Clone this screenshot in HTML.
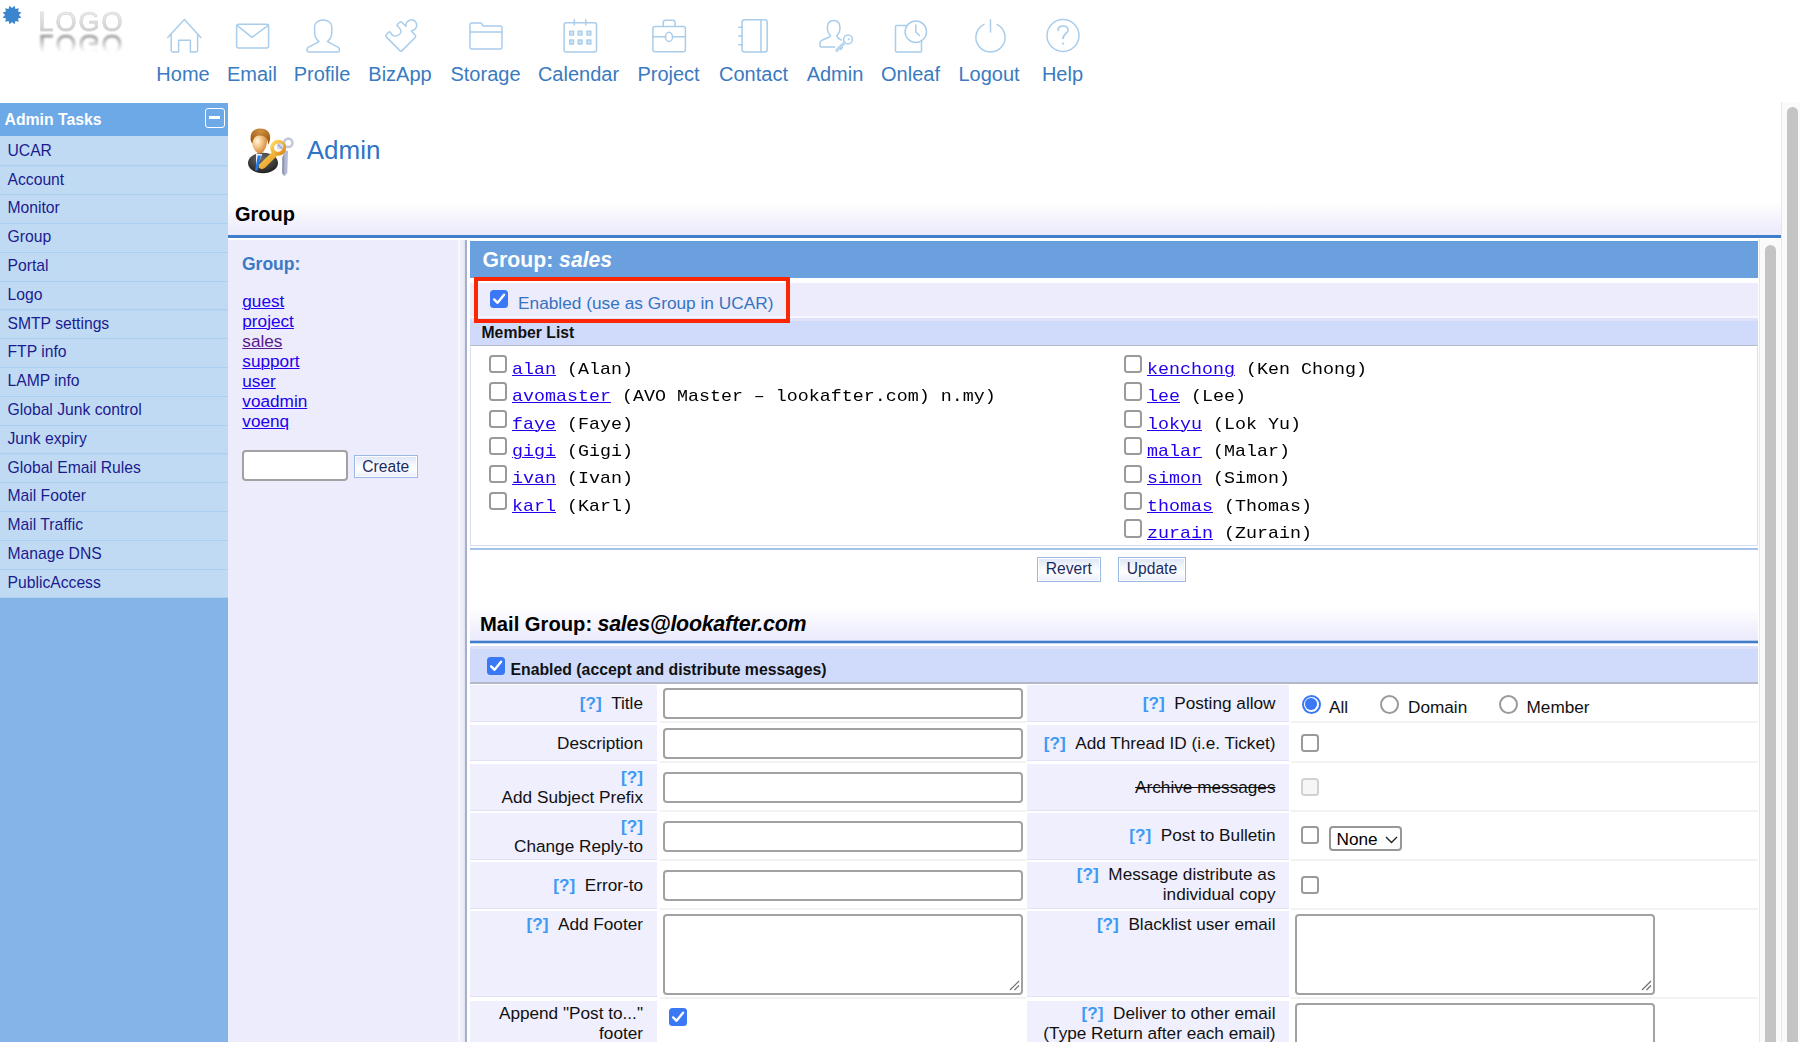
<!DOCTYPE html>
<html>
<head>
<meta charset="utf-8">
<title>Admin - Group</title>
<style>
*{box-sizing:border-box;}
html,body{margin:0;padding:0;}
body{width:1800px;height:1042px;overflow:hidden;position:relative;background:#fff;font-family:"Liberation Sans",sans-serif;color:#000;}
.abs{position:absolute;}
/* top nav */
.nav{position:absolute;top:0;left:0;width:1800px;height:103px;}
.nl{position:absolute;top:62.400px;font-size:20px;line-height:24px;color:#3a7abf;white-space:nowrap;transform:translateX(-50%);}
.ni{position:absolute;top:16px;width:40px;height:40px;transform:translateX(-50%);}
.ni svg{width:40px;height:40px;fill:none;stroke:#a9cdea;stroke-width:1.5;stroke-linejoin:round;stroke-linecap:round;}
/* sidebar */
.sb{position:absolute;left:0;top:103px;width:228px;height:939px;background:#85b5e8;}
.sbh{position:absolute;left:0;top:0;width:228px;height:33px;background:#6ca9e6;color:#fff;font-weight:bold;font-size:15.800px;line-height:33px;padding-left:4.500px;}
.sbi{position:absolute;left:0;width:228px;height:28.800px;background:#c1daf3;border-bottom:1.500px solid #abd0ef;color:#1b1b8f;font-size:15.700px;line-height:26.900px;padding-left:7.500px;}
/* main */
.lnk{color:#2200ee;text-decoration:underline;text-decoration-thickness:1.300px;}
.vis{color:#551a8b;text-decoration:underline;text-decoration-thickness:1.300px;}

.cb{position:absolute;width:18.200px;height:18.200px;border:2px solid #9a9a9a;border-radius:3.500px;background:#fff;}
.cbc{position:absolute;width:18.200px;height:18.200px;border-radius:3.500px;background:#3b78f5;}
.cbc svg{position:absolute;left:0;top:0;width:18.200px;height:18.200px;}
.mono{position:absolute;font-family:"Liberation Mono",monospace;font-size:16.200px;line-height:22px;white-space:pre;color:#000;transform:scaleX(1.1317);transform-origin:0 0;margin-top:1.400px;}
.btn{position:absolute;height:24.200px;border:1.300px solid #9bb9e4;background:linear-gradient(#dde5f4 0%,#f1f5fb 35%,#ffffff 60%,#e8eefa 100%);color:#1c2a64;font-size:15.600px;line-height:22px;text-align:center;box-shadow:inset 0 0 0 1px #fff;}
.lc{position:absolute;background:#efeffd;border-bottom:1.500px solid #dfe2f3;}
.vc{position:absolute;background:#fff;border-bottom:2px solid #f2f2f2;}
.lb{position:absolute;font-size:17.200px;line-height:20px;text-align:right;color:#111;white-space:nowrap;}
.q{color:#3e9af4;font-weight:bold;}
.inp{position:absolute;background:#fff;border:2px solid #a2a2a2;border-radius:4px;}
.rad{position:absolute;width:19px;height:19px;border:2px solid #9a9a9a;border-radius:50%;background:#fff;}
</style>
</head>
<body>
<!-- NAV -->
<div class="nav" id="nav">
<!-- starburst -->
<svg class="abs" style="left:1.800px;top:5px" width="20" height="20" viewBox="-10 -10 20 20"><polygon fill="#3b85ce" points="2.51,-9.37 3.45,-5.98 6.86,-6.86 5.98,-3.45 9.37,-2.51 6.90,-0.00 9.37,2.51 5.98,3.45 6.86,6.86 3.45,5.98 2.51,9.37 0.00,6.90 -2.51,9.37 -3.45,5.98 -6.86,6.86 -5.98,3.45 -9.37,2.51 -6.90,0.00 -9.37,-2.51 -5.98,-3.45 -6.86,-6.86 -3.45,-5.98 -2.51,-9.37 -0.00,-6.90"/></svg>
<!-- logo -->
<div class="abs" style="left:38.500px;top:5.500px;font-size:27px;line-height:32px;letter-spacing:2px;filter:blur(0.700px);-webkit-text-stroke:0.700px #d9d9d9;background:linear-gradient(to bottom,#e8e8e8 30%,#cbcbcb 80%);-webkit-background-clip:text;background-clip:text;color:transparent;">LOGO</div>
<div class="abs" style="left:38.500px;top:27.500px;font-size:27px;line-height:32px;letter-spacing:2px;transform:scaleY(-1);filter:blur(0.900px);-webkit-text-stroke:0.700px transparent;background:linear-gradient(to bottom,rgba(255,255,255,0) 25%,rgba(140,140,140,0.900) 78%);-webkit-background-clip:text;background-clip:text;color:transparent;">LOGO</div>

<div class="ni" style="left:183.5px"><svg viewBox="0 0 40 40"><path d="M3.800 21.500 L20.400 3.500 L36.800 21.500 M7.200 18 V34.500 Q7.200 35.900 8.600 35.900 H14.600 V24.200 H26.400 V35.900 H32.200 Q33.600 35.900 33.600 34.500 V18"/></svg></div>
<div class="nl" style="left:183px">Home</div>

<div class="ni" style="left:251.5px"><svg viewBox="0 0 40 40"><rect x="4.600" y="8.300" width="32" height="23.600" rx="2"/><path d="M5.400 9.600 L20 21.400 L35.800 9.600"/></svg></div>
<div class="nl" style="left:252px">Email</div>

<div class="ni" style="left:322.5px"><svg viewBox="0 0 40 40"><path d="M16 25.600 L5.200 31.400 Q4.100 32 4.100 33.300 V34.400 Q4.100 35.900 5.600 35.900 H34.900 Q36.400 35.900 36.400 34.400 V33.200 Q36.400 32 35.300 31.400 L24.400 25.600 C27 23.500 28.800 20 28.800 15.900 V11 C28.800 7 25.500 3.900 20.200 3.900 C14.900 3.900 11.600 7 11.600 11 V15.900 C11.600 20 13.400 23.500 16 25.600"/></svg></div>
<div class="nl" style="left:322px">Profile</div>

<div class="ni" style="left:401px"><svg viewBox="0 0 40 40"><path d="M21 34.600 Q19.900 35.700 18.800 34.600 L5.300 20.900 Q4.200 19.800 5.300 18.700 L7.800 16.100 Q8.500 15.400 9.200 16.200 L10.900 18.500 C12 20 14.500 20.400 16.200 19.600 C18.500 18.500 20.200 16.500 19.900 15 C19.700 13.500 19 12.500 18 11.500 L16.300 9.900 Q15.600 9.200 16.300 8.500 L18.700 6.200 Q19.700 5.300 20.700 6.200 L25 10.200 A5.400 5.400 0 1 1 31 14.600 Q30 14.700 30.800 15.600 L34.200 19.300 Q35.300 20.400 34.200 21.500 Z"/></svg></div>
<div class="nl" style="left:400px">BizApp</div>

<div class="ni" style="left:486px"><svg viewBox="0 0 40 40"><path d="M4 12 V8.5 Q4 7 5.5 7 H14.5 Q15.5 7 16 8 L17 10 H34.5 Q36 10 36 11.5 V31.5 Q36 33 34.5 33 H5.5 Q4 33 4 31.5 Z M4 16 H36"/></svg></div>
<div class="nl" style="left:485.5px">Storage</div>

<div class="ni" style="left:579.5px"><svg viewBox="0 0 40 40"><rect x="4.100" y="6.800" width="32.400" height="29.300" rx="2"/><path d="M14.300 3.800 V9.100 M25.800 3.800 V9.100"/><path d="M9.6 15.1 h4 v4 h-4z M18.1 15.1 h4 v4 h-4z M26.9 15.1 h4 v4 h-4z M9.6 24.0 h4 v4 h-4z M18.1 24.0 h4 v4 h-4z M26.9 24.0 h4 v4 h-4z " fill="#cfe3f4" stroke-width="1.300"/></svg></div>
<div class="nl" style="left:578.5px">Calendar</div>

<div class="ni" style="left:669px"><svg viewBox="0 0 40 40"><rect x="3.900" y="10.400" width="32.500" height="25.400" rx="2"/><path d="M14.200 10.400 V6.800 Q14.200 4.300 16.700 4.300 H23.600 Q26.100 4.300 26.100 6.800 V10.400 M3.900 20.700 H16.500 M23.500 20.700 H36.400"/><ellipse cx="20" cy="20.900" rx="3.500" ry="4.600"/></svg></div>
<div class="nl" style="left:668.5px">Project</div>

<div class="ni" style="left:753px"><svg viewBox="0 0 40 40"><rect x="9.100" y="3.800" width="25.100" height="32.300" rx="2.500"/><path d="M28 3.800 V36.100 M5.800 11.200 H9.100 M5.800 20.100 H9.100 M5.800 28.700 H9.100"/></svg></div>
<div class="nl" style="left:753.5px">Contact</div>

<div class="ni" style="left:835.5px"><svg viewBox="0 0 40 40"><path d="M18.600 30.900 H5 Q4 30.900 4 29.900 V26.800 C4 25.200 5 24.400 8 23.300 C11.500 22 14 21.300 14.400 19.800 C12 17 11.300 15 11.300 12 C11.300 7 13.500 4.400 17.700 4.400 C21.900 4.400 24 7 24 12 C24 15 23.400 17 20.800 19.800 C21 21.500 23 22.600 25.400 24.200"/><circle cx="32" cy="23.400" r="4.400"/><circle cx="32.600" cy="23.200" r="0.500" stroke-width="1"/><path d="M28.300 26.800 L20.800 34.300" stroke-width="3.200" stroke="#b9d7ef"/><path d="M24.500 33.500 L26.500 31.500" stroke-width="1.500"/></svg></div>
<div class="nl" style="left:835px">Admin</div>

<div class="ni" style="left:911px"><svg viewBox="0 0 40 40"><path d="M15 9.500 H5.500 Q4.500 9.500 4.500 10.500 V35 Q4.500 36 5.500 36 H29.500 Q30.500 36 30.500 35 V25.500"/><circle cx="24.800" cy="15.700" r="10.700"/><path d="M24.800 9 V16 L28.500 19.500"/></svg></div>
<div class="nl" style="left:910.5px">Onleaf</div>

<div class="ni" style="left:989.5px"><svg viewBox="0 0 40 40"><path d="M14 8.300 A14.600 14.600 0 1 0 27 8.300"/><path d="M20.500 3.700 V16"/></svg></div>
<div class="nl" style="left:989px">Logout</div>

<div class="ni" style="left:1063px"><svg viewBox="0 0 40 40"><circle cx="20" cy="19.500" r="16"/><path d="M15 14.500 C15 11.500 17 10 20 10 C23 10 25 11.500 25 14 C25 17.500 20 18 20 22.500 M20 27 V28" stroke-width="1.700"/></svg></div>
<div class="nl" style="left:1062.5px">Help</div>
</div>
<!-- SIDEBAR -->
<div class="sb" id="sb">
<div class="abs" style="left:0;top:33px;width:228px;height:461px;background:#b6d5f1"></div><div class="abs" style="left:0;top:33px;width:228px;height:4px;background:#c1daf3"></div><div class="sbh">Admin Tasks</div>
<div class="abs" style="left:205px;top:4.500px;width:20px;height:20px;border:1.800px solid #fff;border-radius:3px;"><div class="abs" style="left:2.700px;top:7.600px;width:11px;height:2.500px;background:#fff"></div></div>
<div class="sbi" style="top:34.7px">UCAR</div>
<div class="sbi" style="top:63.5px">Account</div>
<div class="sbi" style="top:92.3px">Monitor</div>
<div class="sbi" style="top:121.1px">Group</div>
<div class="sbi" style="top:149.9px">Portal</div>
<div class="sbi" style="top:178.7px">Logo</div>
<div class="sbi" style="top:207.5px">SMTP settings</div>
<div class="sbi" style="top:236.3px">FTP info</div>
<div class="sbi" style="top:265.1px">LAMP info</div>
<div class="sbi" style="top:293.9px">Global Junk control</div>
<div class="sbi" style="top:322.7px">Junk expiry</div>
<div class="sbi" style="top:351.5px">Global Email Rules</div>
<div class="sbi" style="top:380.3px">Mail Footer</div>
<div class="sbi" style="top:409.1px">Mail Traffic</div>
<div class="sbi" style="top:437.9px">Manage DNS</div>
<div class="sbi" style="top:466.7px">PublicAccess</div>
</div>
<!-- MAIN -->
<div id="main">
<!-- admin icon -->
<svg class="abs" style="left:245px;top:126px" width="52" height="52" viewBox="0 0 52 52">
<defs>
<radialGradient id="face" cx="0.36" cy="0.36" r="0.65"><stop offset="0" stop-color="#fff6e2"/><stop offset="0.4" stop-color="#f8cf98"/><stop offset="1" stop-color="#d88a3a"/></radialGradient>
<radialGradient id="hair" cx="0.5" cy="0.15" r="0.75"><stop offset="0" stop-color="#cf9040"/><stop offset="1" stop-color="#9c570f"/></radialGradient>
<radialGradient id="suit" cx="0.45" cy="0.3" r="0.75"><stop offset="0" stop-color="#6b6b6b"/><stop offset="1" stop-color="#1c1c1c"/></radialGradient>
<linearGradient id="gold" x1="0" y1="0" x2="1" y2="1"><stop offset="0" stop-color="#ffdc62"/><stop offset="1" stop-color="#de8812"/></linearGradient>
<filter id="bl"><feGaussianBlur stdDeviation="0.55"/></filter>
</defs>
<g filter="url(#bl)">
<ellipse cx="18" cy="37" rx="15" ry="10.300" fill="url(#suit)"/>
<path d="M11 28 L17.300 28 L11 43.500 Z" fill="#f1f1f1"/>
<path d="M12.800 29.600 L15.900 29.600 L12.600 44.600 L10 44.600 Z" fill="#2478e6"/>
<path d="M7 15 C7 9 10 8 14.500 8 C19 8 22 9 22 15 C22 21 18.500 27.500 14.700 27.500 C11 27.500 7 21 7 15 Z" fill="url(#face)"/>
<path d="M5.700 14 C4.800 6 9 2.600 15 2.600 C21.500 2.600 26 6 25 13.500 C24.600 16 23.800 17.500 23 19 C23.300 14 21.500 11 18 10 C13 8.800 8.300 9.500 7.300 17.500 C6.500 16.500 6 15.500 5.700 14 Z" fill="url(#hair)"/>
<circle cx="43.300" cy="16.800" r="4.200" fill="none" stroke="#c3c8da" stroke-width="2.600"/>
<path d="M38.500 24 L43 25 L42.300 47 L39.300 50.200 L37 47.500 Z" fill="#b4bad2"/>
<path d="M39.300 28 L37.200 31 L37.200 46.500 L39.300 49.500 Z" fill="#8f97b6"/>
<circle cx="33.100" cy="21.800" r="6" fill="none" stroke="url(#gold)" stroke-width="4"/>
<path d="M27.800 25.300 L32.200 29.800 L20 41.800 L17 43.300 L13.800 41.800 L14.200 38.600 Z" fill="url(#gold)"/>
<circle cx="35" cy="20.500" r="3.300" fill="#d5d9e6"/>
<path d="M33 18.500 L37 22.500" stroke="#9aa2c0" stroke-width="1.200"/>
</g>
</svg>
<div class="abs" style="left:306.700px;top:134px;font-size:26px;line-height:32px;color:#2f74c5;">Admin</div>

<!-- Group heading -->
<div class="abs" style="left:228px;top:200px;width:1553px;height:35.500px;background:linear-gradient(to bottom,#ffffff 0%,#ffffff 6%,#eeedfc 80%,#ecebfb 100%);"></div>
<div class="abs" style="left:235px;top:202px;font-size:20px;line-height:24px;font-weight:bold;color:#000;">Group</div>
<div class="abs" style="left:228px;top:235.100px;width:1553px;height:3px;background:#407dca;"></div>

<!-- left panel -->
<div class="abs" style="left:228px;top:239.600px;width:237px;height:803px;background:#edecfc;"></div>
<div class="abs" style="left:457.800px;top:239.600px;width:7.200px;height:803px;background:linear-gradient(to right,#f8f8fe 0%,#f6f6fd 25%,#f0f0fb 30%,#eeeefa 70%,#dde2ef 100%);"></div>
<div class="abs" style="left:465px;top:239.600px;width:2px;height:803px;background:#a8afcd;"></div>
<div class="abs" style="left:242px;top:253px;font-size:17.500px;line-height:22px;font-weight:bold;color:#3a7ac4;">Group:</div>
<div class="abs" style="left:242.300px;top:291.200px;font-size:17.200px;line-height:20.050px;">
<span class="lnk">guest</span><br><span class="lnk">project</span><br><span class="vis">sales</span><br><span class="lnk">support</span><br><span class="lnk">user</span><br><span class="lnk">voadmin</span><br><span class="lnk">voenq</span></div>
<div class="inp" style="left:242px;top:450px;width:106px;height:31px;"></div>
<div class="btn" style="left:353.500px;top:454.500px;width:64.500px;height:23.500px;">Create</div>

<!-- right panel -->
<div class="abs" style="left:470px;top:241.400px;width:1287.500px;height:36.800px;background:#6aa0de;border-top:1px solid #5f9ddd;"></div>
<div class="abs" style="left:482.600px;top:246.700px;font-size:21.200px;line-height:26px;font-weight:bold;color:#fff;white-space:nowrap;">Group: <i>sales</i></div>
<div class="abs" style="left:470px;top:283px;width:1287.500px;height:33px;background:#ececfd;"></div>
<div class="abs" style="left:470px;top:316px;width:1287.500px;height:2px;background:#f6f6fe;"></div>
<div class="abs" style="left:470px;top:318px;width:1287.500px;height:3px;background:#dfe1fb;"></div>
<div class="abs" style="left:470px;top:320.500px;width:1287.500px;height:24.300px;background:#d0dbfc;"></div>
<div class="abs" style="left:470px;top:344.700px;width:1287.500px;height:1.500px;background:#b3b8c9;"></div>
<div class="abs" style="left:474px;top:277px;width:316px;height:46px;border:4px solid #fc2603;"></div>
<div class="cbc" style="left:490px;top:290px;"><svg viewBox="0 0 18.500 18.500"><path d="M4.200 9.600 L7.700 13 L14.300 4.800" fill="none" stroke="#fff" stroke-width="2.400" stroke-linecap="round" stroke-linejoin="round"/></svg></div>
<div class="abs" style="left:518px;top:291.700px;font-size:17.300px;line-height:22px;color:#3674be;white-space:nowrap;">Enabled (use as Group in UCAR)</div>
<div class="abs" style="left:481.500px;top:322.700px;font-size:15.750px;line-height:20px;font-weight:bold;color:#111;">Member List</div>
<!-- member box -->
<div class="abs" style="left:470px;top:346.500px;width:1287.500px;height:199px;border:1.500px solid #d9deef;border-top:none;background:#fff;"></div>
<div class="abs" style="left:470px;top:548px;width:1287.500px;height:2.400px;background:#a6c3ea;"></div>
<div class="cb" style="left:488.500px;top:355.0px"></div><div class="mono" style="left:512px;top:357.5px"><span class="lnk">alan</span> (Alan)</div>
<div class="cb" style="left:488.500px;top:382.4px"></div><div class="mono" style="left:512px;top:384.9px"><span class="lnk">avomaster</span> (AVO Master – lookafter.com) n.my)</div>
<div class="cb" style="left:488.500px;top:409.8px"></div><div class="mono" style="left:512px;top:412.3px"><span class="lnk">faye</span> (Faye)</div>
<div class="cb" style="left:488.500px;top:437.2px"></div><div class="mono" style="left:512px;top:439.7px"><span class="lnk">gigi</span> (Gigi)</div>
<div class="cb" style="left:488.500px;top:464.6px"></div><div class="mono" style="left:512px;top:467.1px"><span class="lnk">ivan</span> (Ivan)</div>
<div class="cb" style="left:488.500px;top:492.0px"></div><div class="mono" style="left:512px;top:494.5px"><span class="lnk">karl</span> (Karl)</div>
<div class="cb" style="left:1124px;top:355.0px"></div><div class="mono" style="left:1147px;top:357.5px"><span class="lnk">kenchong</span> (Ken Chong)</div>
<div class="cb" style="left:1124px;top:382.4px"></div><div class="mono" style="left:1147px;top:384.9px"><span class="lnk">lee</span> (Lee)</div>
<div class="cb" style="left:1124px;top:409.8px"></div><div class="mono" style="left:1147px;top:412.3px"><span class="lnk">lokyu</span> (Lok Yu)</div>
<div class="cb" style="left:1124px;top:437.2px"></div><div class="mono" style="left:1147px;top:439.7px"><span class="lnk">malar</span> (Malar)</div>
<div class="cb" style="left:1124px;top:464.6px"></div><div class="mono" style="left:1147px;top:467.1px"><span class="lnk">simon</span> (Simon)</div>
<div class="cb" style="left:1124px;top:492.0px"></div><div class="mono" style="left:1147px;top:494.5px"><span class="lnk">thomas</span> (Thomas)</div>
<div class="cb" style="left:1124px;top:519.4px"></div><div class="mono" style="left:1147px;top:521.9px"><span class="lnk">zurain</span> (Zurain)</div>

<div class="btn" style="left:1037px;top:557.400px;width:63.500px;">Revert</div>
<div class="btn" style="left:1118px;top:557.400px;width:68px;">Update</div>

<!-- Mail group -->
<div class="abs" style="left:470px;top:606px;width:1287.500px;height:35px;background:linear-gradient(to bottom,#ffffff 0%,#ffffff 6%,#eeedfc 80%,#ecebfb 100%);"></div>
<div class="abs" style="left:480px;top:611.500px;font-size:20.200px;line-height:24px;font-weight:bold;color:#000;white-space:nowrap;">Mail Group:</div><div class="abs" id="mg" style="left:597.500px;top:610.500px;font-size:21.400px;line-height:26px;font-weight:bold;font-style:italic;letter-spacing:-0.250px;color:#000;white-space:nowrap;">sales@lookafter.com</div>
<div class="abs" style="left:470px;top:640px;width:1287.500px;height:4px;background:linear-gradient(to bottom,#b8caec 0,#b8caec 25%,#407dca 25%,#407dca 75%,#c6d8ef 75%,#c6d8ef 100%);"></div>
<div class="abs" style="left:470px;top:646px;width:1287.500px;height:4px;background:#dfe1fb;"></div>
<div class="abs" style="left:470px;top:649.300px;width:1287.500px;height:32.700px;background:#d0dbfc;"></div>
<div class="abs" style="left:470px;top:682px;width:1287.500px;height:1.500px;background:#b3b8c9;"></div>
<div class="cbc" style="left:486.500px;top:656.500px;"><svg viewBox="0 0 18.500 18.500"><path d="M4.200 9.600 L7.700 13 L14.300 4.800" fill="none" stroke="#fff" stroke-width="2.400" stroke-linecap="round" stroke-linejoin="round"/></svg></div>
<div class="abs" style="left:510.500px;top:660px;font-size:15.800px;line-height:20px;font-weight:bold;color:#111;white-space:nowrap;">Enabled (accept and distribute messages)</div>
<div class="lc" style="left:470px;top:685px;width:187.300px;height:36.9px"></div><div class="vc" style="left:659.500px;top:685px;width:366px;height:38.4px"></div><div class="lc" style="left:1027.200px;top:685px;width:261.500px;height:36.9px"></div><div class="vc" style="left:1291px;top:685px;width:466.500px;height:38.4px"></div>
<div class="lc" style="left:470px;top:724.6px;width:187.300px;height:36.9px"></div><div class="vc" style="left:659.500px;top:724.6px;width:366px;height:38.4px"></div><div class="lc" style="left:1027.200px;top:724.6px;width:261.500px;height:36.9px"></div><div class="vc" style="left:1291px;top:724.6px;width:466.500px;height:38.4px"></div>
<div class="lc" style="left:470px;top:763.9px;width:187.300px;height:46.7px"></div><div class="vc" style="left:659.500px;top:763.9px;width:366px;height:48.2px"></div><div class="lc" style="left:1027.200px;top:763.9px;width:261.500px;height:46.7px"></div><div class="vc" style="left:1291px;top:763.9px;width:466.500px;height:48.2px"></div>
<div class="lc" style="left:470px;top:813.2px;width:187.300px;height:46.4px"></div><div class="vc" style="left:659.500px;top:813.2px;width:366px;height:47.9px"></div><div class="lc" style="left:1027.200px;top:813.2px;width:261.500px;height:46.4px"></div><div class="vc" style="left:1291px;top:813.2px;width:466.500px;height:47.9px"></div>
<div class="lc" style="left:470px;top:862px;width:187.300px;height:46.5px"></div><div class="vc" style="left:659.500px;top:862px;width:366px;height:48.0px"></div><div class="lc" style="left:1027.200px;top:862px;width:261.500px;height:46.5px"></div><div class="vc" style="left:1291px;top:862px;width:466.500px;height:48.0px"></div>
<div class="lc" style="left:470px;top:910.6px;width:187.300px;height:86.9px"></div><div class="vc" style="left:659.500px;top:910.6px;width:366px;height:88.4px"></div><div class="lc" style="left:1027.200px;top:910.6px;width:261.500px;height:86.9px"></div><div class="vc" style="left:1291px;top:910.6px;width:466.500px;height:88.4px"></div>
<div class="lc" style="left:470px;top:1000.5px;width:187.300px;height:60px"></div><div class="vc" style="left:659.500px;top:1000.5px;width:366px;height:61.5px"></div><div class="lc" style="left:1027.200px;top:1000.5px;width:261.500px;height:60px"></div><div class="vc" style="left:1291px;top:1000.5px;width:466.500px;height:61.5px"></div>
<div class="lb" style="right:1157px;top:693.300px"><span class="q">[?]</span>&nbsp;&nbsp;Title</div>
<div class="lb" style="right:1157px;top:733px">Description</div>
<div class="lb" style="right:1157px;top:767.100px"><span class="q">[?]</span><br>Add Subject Prefix</div>
<div class="lb" style="right:1157px;top:816.100px"><span class="q">[?]</span><br>Change Reply-to</div>
<div class="lb" style="right:1157px;top:874.600px"><span class="q">[?]</span>&nbsp;&nbsp;Error-to</div>
<div class="lb" style="right:1157px;top:913.500px"><span class="q">[?]</span>&nbsp;&nbsp;Add Footer</div>
<div class="lb" style="right:1157px;top:1003px">Append "Post to..."<br>footer</div>
<div class="lb" style="right:524.5px;top:693.300px"><span class="q">[?]</span>&nbsp;&nbsp;Posting allow</div>
<div class="lb" style="right:524.5px;top:733px"><span class="q">[?]</span>&nbsp;&nbsp;Add Thread ID (i.e. Ticket)</div>
<div class="lb" style="right:524.5px;top:776.700px"><span style="text-decoration:line-through">Archive messages</span></div>
<div class="lb" style="right:524.5px;top:825.400px"><span class="q">[?]</span>&nbsp;&nbsp;Post to Bulletin</div>
<div class="lb" style="right:524.5px;top:864.200px"><span class="q">[?]</span>&nbsp;&nbsp;Message distribute as<br>individual copy</div>
<div class="lb" style="right:524.5px;top:913.500px"><span class="q">[?]</span>&nbsp;&nbsp;Blacklist user email</div>
<div class="lb" style="right:524.5px;top:1003px"><span class="q">[?]</span>&nbsp;&nbsp;Deliver to other email<br>(Type Return after each email)</div>
<div class="inp" style="left:663px;top:688px;width:360px;height:31px"></div>
<div class="inp" style="left:663px;top:727.5px;width:360px;height:31px"></div>
<div class="inp" style="left:663px;top:772px;width:360px;height:31px"></div>
<div class="inp" style="left:663px;top:821px;width:360px;height:31px"></div>
<div class="inp" style="left:663px;top:870px;width:360px;height:31px"></div>
<div class="inp" style="left:663px;top:914px;width:360px;height:80.500px"><svg class="abs" style="right:1.500px;bottom:1.500px" width="11" height="11" viewBox="0 0 11 11"><path d="M10 1 L1 10 M10 5.500 L5.500 10" stroke="#6f6f6f" stroke-width="1.200" fill="none"/></svg></div>
<div class="inp" style="left:1295px;top:914px;width:360px;height:80.500px"><svg class="abs" style="right:1.500px;bottom:1.500px" width="11" height="11" viewBox="0 0 11 11"><path d="M10 1 L1 10 M10 5.500 L5.500 10" stroke="#6f6f6f" stroke-width="1.200" fill="none"/></svg></div>
<div class="inp" style="left:1295px;top:1003px;width:360px;height:80px"></div>
<div class="rad" style="left:1301.500px;top:694.500px;border-color:#3b78f5;border-width:2px"><div class="abs" style="left:1.750px;top:1.750px;width:11.500px;height:11.500px;border-radius:50%;background:#3b78f5"></div></div><div class="rad" style="left:1380px;top:694.500px"></div><div class="rad" style="left:1498.500px;top:694.500px"></div>
<div class="lb" style="left:1329px;top:696.600px">All</div><div class="lb" style="left:1408px;top:696.600px">Domain</div><div class="lb" style="left:1526.500px;top:696.600px">Member</div>
<div class="cb" style="left:1301px;top:734px"></div><div class="cb" style="left:1301px;top:778px;border-color:#d2d2d2;background:#f6f6f6"></div><div class="cb" style="left:1301px;top:826px"></div><div class="cb" style="left:1301px;top:876px"></div>
<div class="inp" style="left:1329px;top:825.800px;width:73px;height:25px;border:2px solid #979797;border-radius:4px"><div class="abs" style="left:5.500px;top:1.200px;font-size:17.200px;line-height:20px;color:#000">None</div><svg class="abs" style="left:54px;top:8px" width="13" height="8" viewBox="0 0 13 8"><path d="M1 1 L6.500 6.500 L12 1" fill="none" stroke="#222" stroke-width="1.400"/></svg></div>
<div class="cbc" style="left:669px;top:1007.500px;"><svg viewBox="0 0 18.500 18.500"><path d="M4.200 9.600 L7.700 13 L14.300 4.800" fill="none" stroke="#fff" stroke-width="2.400" stroke-linecap="round" stroke-linejoin="round"/></svg></div>

<!-- scrollbars -->
<div class="abs" style="left:1759px;top:239px;width:21.500px;height:803px;background:#fafafa;border-left:1px solid #e8e8e8;"></div>
<div class="abs" style="left:1765px;top:244.500px;width:11.300px;height:820px;border-radius:6px;background:#c4c4c4;"></div>
<div class="abs" style="left:1780.500px;top:102px;width:19.500px;height:940px;background:#fafafa;border-left:1px solid #e8e8e8;"></div>
<div class="abs" style="left:1786.700px;top:107px;width:11.200px;height:960px;border-radius:6px;background:#c4c4c4;"></div>
</div>
</body>
</html>
